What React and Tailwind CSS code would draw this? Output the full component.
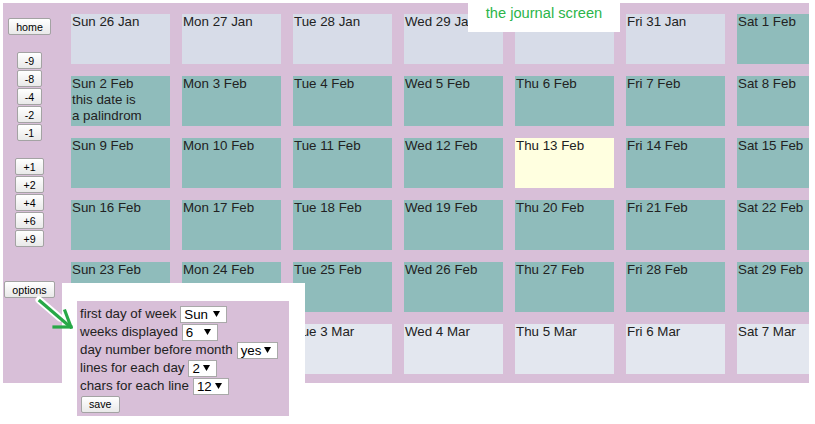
import React from "react";

const MONTHS = ["Jan", "Feb", "Mar"];
const DAYS = ["Sun", "Mon", "Tue", "Wed", "Thu", "Fri", "Sat"];

function buildCells() {
  const cells = [];
  const start = new Date(2020, 0, 26);
  for (let i = 0; i < 42; i++) {
    const d = new Date(start.getFullYear(), start.getMonth(), start.getDate() + i);
    const m = d.getMonth();
    const day = d.getDate();
    let bg = "bg-[#8fbcbb]";
    if (m === 0) bg = "bg-[#d7dce8]";
    if (m === 2) bg = "bg-[#e3e7ef]";
    if (m === 1 && day === 13) bg = "bg-[#ffffe0]";
    const lines = [`${DAYS[d.getDay()]} ${day} ${MONTHS[m]}`];
    if (m === 1 && day === 2) {
      lines.push("this date is", "a palindrom");
    }
    cells.push({ key: i, bg, lines });
  }
  return cells;
}

function Btn({ children, className = "" }) {
  return (
    <div
      className={
        "h-[17px] flex items-center justify-center px-[7px] border border-[#a3a3a3] rounded-[2px] bg-gradient-to-b from-[#ffffff] to-[#e9e9e9] text-[10.67px] leading-[12px] text-black " +
        className
      }
    >
      {children}
    </div>
  );
}

function Sel({ value, w }) {
  return (
    <span
      className="inline-flex items-center justify-between h-[17px] border border-[#a9a9a9] bg-white pl-[3px] pr-[6px] ml-[4px] align-middle text-[13.33px] leading-[15px] text-black"
      style={{ width: w }}
    >
      <span>{value}</span>
      <svg width="7" height="6" viewBox="0 0 7 6">
        <polygon points="0,0 7,0 3.5,6" fill="#000" />
      </svg>
    </span>
  );
}

export default function App() {
  const cells = buildCells();
  const minus = ["-9", "-8", "-4", "-2", "-1"];
  const plus = ["+1", "+2", "+4", "+6", "+9"];
  return (
    <div className="relative w-[815px] h-[424px] bg-white overflow-hidden font-['Liberation_Sans',Arial,sans-serif] text-[#222]">
      <div className="ml-[3px] mt-[3px] w-[806px] h-[380px] bg-[#d8bfd8] overflow-hidden flex">
        <div className="w-[53px] shrink-0 flex flex-col items-center pt-[15px]">
          <Btn>home</Btn>
          <div className="mt-[17px] flex flex-col items-center gap-[1px]">
            {minus.map((b) => (
              <Btn key={b}>{b}</Btn>
            ))}
          </div>
          <div className="mt-[17px] flex flex-col items-center gap-[1px]">
            {plus.map((b) => (
              <Btn key={b}>{b}</Btn>
            ))}
          </div>
          <div className="mt-[34px]">
            <Btn>options</Btn>
          </div>
        </div>
        <div className="ml-[15px] pt-[11px] shrink-0 grid grid-cols-[repeat(7,99px)] auto-rows-[50px] gap-[12px]">
          {cells.map((c) => (
            <div key={c.key} className={c.bg + " pl-[1px] text-[13.33px] leading-[16px] text-[#222]"}>
              {c.lines.map((l, i) => (
                <div key={i}>{l}</div>
              ))}
            </div>
          ))}
        </div>
      </div>

      {/* title */}
      <div className="absolute left-[468px] top-0 w-[152px] h-[32px] bg-white flex justify-center pt-[5px]">
        <span className="text-[14.67px] leading-[17px] text-[#2bb54a]">the journal screen</span>
      </div>

      {/* options popup */}
      <div className="absolute left-[62px] top-[283px] w-[243px] h-[141px] bg-white pl-[15px] pt-[18px]">
        <div className="w-[212px] h-[115px] bg-[#d8bfd8] pl-[3px] pt-[4px] text-[13.33px] text-[#222]">
          <div className="h-[18px] flex items-center">
            <span>first day of week</span>
            <Sel value="Sun" w={47} />
          </div>
          <div className="h-[18px] flex items-center">
            <span>weeks displayed</span>
            <Sel value="6" w={36} />
          </div>
          <div className="h-[18px] flex items-center">
            <span>day number before month</span>
            <Sel value="yes" w={41} />
          </div>
          <div className="h-[18px] flex items-center">
            <span>lines for each day</span>
            <Sel value="2" w={29} />
          </div>
          <div className="h-[18px] flex items-center">
            <span>chars for each line</span>
            <Sel value="12" w={36} />
          </div>
          <div className="h-[18px] flex items-center pl-[1px]">
            <Btn>save</Btn>
          </div>
        </div>
      </div>

      {/* arrow */}
      <svg className="absolute left-0 top-0 pointer-events-none" width="90" height="340" viewBox="0 0 90 340">
        <g stroke="#ffffff" strokeWidth="7" strokeLinecap="round" fill="none">
          <line x1="39" y1="300" x2="60" y2="318" />
        </g>
        <g stroke="#27a847" strokeWidth="3.2" fill="none" strokeLinecap="square">
          <line x1="40" y1="301" x2="68" y2="325" />
          <line x1="54" y1="327" x2="71" y2="327" />
          <line x1="65" y1="311" x2="71" y2="327" />
        </g>
      </svg>
    </div>
  );
}
